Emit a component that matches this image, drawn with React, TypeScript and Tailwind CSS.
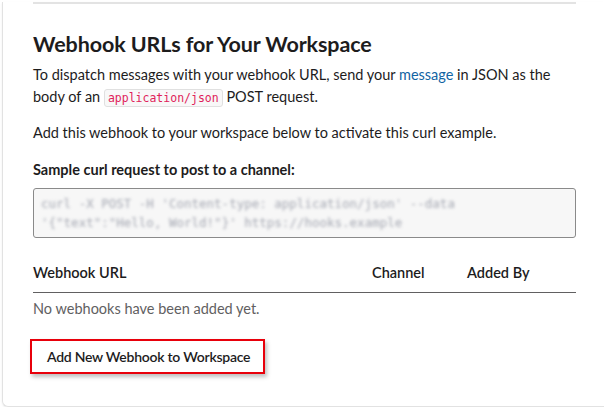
import React from "react";

export default function App() {
  return (
    <div className="w-[604px] h-[407px] bg-white overflow-hidden" style={{ fontFamily: "Lato, 'Open Sans', sans-serif" }}>
      <div className="ml-[2px] h-[405px] border-l border-b border-[#e2e2e2] rounded-bl-[6px] shadow-[0_1px_2px_rgba(0,0,0,0.08)] pl-[30px] pr-[28px] text-[#1d1c1d]">
        <div className="h-[2px] mt-[2px] bg-[#e3e3e3]" />
        <h2 className="mt-[27px] text-[21.5px] leading-[26px] font-bold tracking-[-0.1px]">Webhook URLs for Your Workspace</h2>
        <p className="mt-[7px] text-[14.5px] leading-[22px]">
          To dispatch messages with your webhook URL, send your <span className="text-[#1264a3]">message</span> in JSON as the body of an{" "}
          <code className="inline-block leading-[16px] text-[11.5px] px-[3px] rounded-[3px] border border-[#e0e0e0] bg-[#f8f8f8] text-[#e01e5a]" style={{ fontFamily: "'DejaVu Sans Mono', monospace" }}>application/json</code> POST request.
        </p>
        <p className="mt-[14px] text-[14.5px] leading-[22px]">Add this webhook to your workspace below to activate this curl example.</p>
        <p className="mt-[15px] text-[14.5px] leading-[22px] font-bold">Sample curl request to post to a channel:</p>
        <div className="mt-[7px] h-[50px] border border-[#8a8a8a] rounded-[3px] bg-[#f7f7f7] px-[7px] py-[5px]">
          <div className="blur-[1.5px] text-[12.5px] leading-[19px] text-[#8f93a0] w-[450px] opacity-80" style={{ fontFamily: "'DejaVu Sans Mono', monospace" }}>
            curl -X POST -H 'Content-type: application/json' --data '{"{"}"text":"Hello, World!"{"}"}' https://hooks.example
          </div>
        </div>
        <div className="mt-[24px] flex text-[14.5px] leading-[22px] font-semibold pb-[8px] border-b border-[#616061]">
          <div className="w-[339px]">Webhook URL</div>
          <div className="w-[95px]">Channel</div>
          <div>Added By</div>
        </div>
        <p className="mt-[5px] text-[14.5px] leading-[22px] text-[#616061]">No webhooks have been added yet.</p>
        <button className="mt-[19px] -ml-[3px] h-[35px] pl-[15px] pr-[13px] border-2 border-[#e8000b] bg-white text-[14px] tracking-[-0.25px] font-semibold text-[#1d1c1d] shadow-[2px_3px_4px_rgba(0,0,0,0.25)]">
          Add New Webhook to Workspace
        </button>
      </div>
    </div>
  );
}
